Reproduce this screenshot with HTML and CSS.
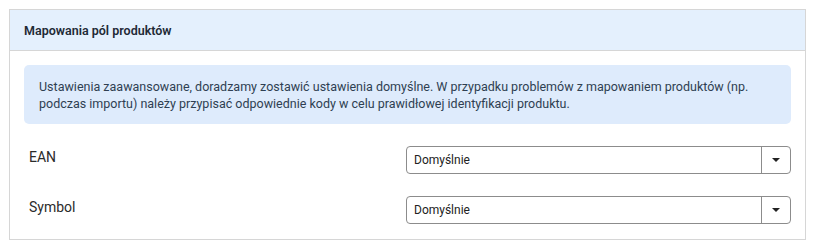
FILE: index.html
```html
<!DOCTYPE html>
<html lang="pl">
<head>
<meta charset="utf-8">
<link rel="stylesheet" href="styles.css">
</head>
<body>
<section class="panel">
  <header class="panel-head">Mapowania pól produktów</header>
  <div class="panel-body">
    <div class="alert">Ustawienia zaawansowane, doradzamy zostawić ustawienia domyślne. W przypadku problemów z mapowaniem produktów (np. podczas importu) należy przypisać odpowiednie kody w celu prawidłowej identyfikacji produktu.</div>
    <div class="rows">
      <div class="row">
        <label class="label">EAN</label>
        <div class="select"><span class="value">Domyślnie</span><span class="arrow"><span class="caret"></span></span></div>
      </div>
      <div class="row">
        <label class="label">Symbol</label>
        <div class="select"><span class="value">Domyślnie</span><span class="arrow"><span class="caret"></span></span></div>
      </div>
    </div>
  </div>
</section>
</body>
</html>
```
FILE: styles.css
```css
html, body { margin: 0; padding: 0; background: #fff; }
body { font-family: Roboto, "Noto Sans", Arial, sans-serif; color: #222; }
.panel {
  margin: 9px 8px 0 9px;
  border: 1px solid #d6d6d6;
  box-sizing: border-box;
  height: 231px;
}
.panel-head {
  height: 40px;
  background: #e4f0fd;
  border-bottom: 1px solid #d6d6d6;
  display: flex;
  align-items: center;
  padding-left: 14px;
  font-size: 12.5px;
  font-weight: 600;
  color: #1f2a36;
}
.panel-body { padding: 14px 14px 0 14px; }
.alert {
  background: #deebfc;
  border-radius: 5px;
  height: 59px;
  box-sizing: border-box;
  padding: 13px 15px 0 15px;
  font-size: 12.5px;
  line-height: 17px;
  color: #2f3f52;
}
.rows { display: flex; flex-direction: column; gap: 22px; padding-top: 22px; }
.row { display: flex; align-items: center; justify-content: space-between; padding-left: 5px; height: 28px; }
.label { font-size: 14px; color: #2b2b2b; padding-bottom: 6px; }
.select {
  width: 385px;
  height: 28px;
  box-sizing: border-box;
  border: 1px solid #8c8c8c;
  border-radius: 4px;
  display: flex;
  align-items: center;
}
.value { flex: 1; padding-left: 7px; font-size: 12px; color: #222; }
.arrow {
  width: 28px;
  height: 100%;
  border-left: 1px solid #8c8c8c;
  display: flex;
  align-items: center;
  justify-content: center;
}
.caret {
  width: 0; height: 0;
  border-left: 4px solid transparent;
  border-right: 4px solid transparent;
  border-top: 4px solid #222;
}
```
